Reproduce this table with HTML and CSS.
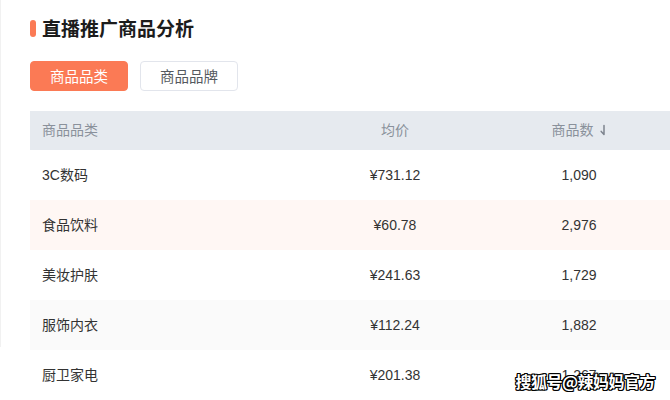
FILE: index.html
```html
<!DOCTYPE html>
<html lang="zh-CN">
<head>
<meta charset="utf-8">
<title>直播推广商品分析</title>
<link rel="stylesheet" href="styles.css">
</head>
<body>
<div class="page">
  <div class="edge"></div>
  <div class="main">
    <h2 class="title"><span class="mark"></span>直播推广商品分析</h2>
    <div class="tabs">
      <button class="tab active">商品品类</button>
      <button class="tab">商品品牌</button>
    </div>
    <div class="table">
      <div class="row head">
        <div class="c1">商品品类</div>
        <div class="c2">均价</div>
        <div class="c3">商品数
          <svg class="sort" width="8" height="12" viewBox="0 0 8 12"><path d="M5 1.5V10.5L2.2 7.4" fill="none" stroke="#7d848e" stroke-width="1.5" stroke-linecap="round" stroke-linejoin="round"/></svg>
        </div>
      </div>
      <div class="row">
        <div class="c1">3C数码</div><div class="c2">¥731.12</div><div class="c3">1,090</div>
      </div>
      <div class="row pink">
        <div class="c1">食品饮料</div><div class="c2">¥60.78</div><div class="c3">2,976</div>
      </div>
      <div class="row">
        <div class="c1">美妆护肤</div><div class="c2">¥241.63</div><div class="c3">1,729</div>
      </div>
      <div class="row gray">
        <div class="c1">服饰内衣</div><div class="c2">¥112.24</div><div class="c3">1,882</div>
      </div>
      <div class="row">
        <div class="c1">厨卫家电</div><div class="c2">¥201.38</div><div class="c3">1,267</div>
      </div>
    </div>
  </div>
</div>
<div class="watermark">搜狐号@辣妈妈官方</div>
</body>
</html>
```

FILE: styles.css
```css
html, body {
  margin: 0;
  padding: 0;
  background: #ffffff;
  overflow: hidden;
}
body {
  width: 670px;
  height: 400px;
  position: relative;
  font-family: "Liberation Sans", "Noto Sans CJK SC", sans-serif;
  color: #333333;
}
.page {
  display: flex;
  align-items: flex-start;
}
.edge {
  width: 1px;
  height: 347px;
  background: #f1f1f1;
  flex: none;
}
.main {
  flex: 1;
  padding: 14px 0 0 29px;
}
.title {
  margin: 0;
  display: flex;
  align-items: center;
  height: 28px;
  font-family: "Noto Sans CJK SC", sans-serif;
  font-size: 19px;
  font-weight: 700;
  color: #1c1c1c;
  line-height: 28px;
}
.mark {
  width: 6px;
  height: 17px;
  border-radius: 3px;
  background: #fb7a55;
  margin-right: 6px;
  margin-top: 1px;
}
.tabs {
  display: flex;
  gap: 12px;
  margin-top: 19px;
}
.tab {
  width: 98px;
  height: 30px;
  border: 1px solid #e2e5ec;
  border-radius: 4px;
  background: #ffffff;
  color: #555a60;
  font-family: "Noto Sans CJK SC", sans-serif;
  font-size: 14.5px;
  padding: 0;
  line-height: 28px;
}
.tab.active {
  background: #fb7a55;
  border-color: #fb7a55;
  color: #ffffff;
}
.table {
  margin-top: 20px;
  width: 641px;
}
.row {
  display: grid;
  grid-template-columns: 273px 184px 184px;
  height: 50px;
  align-items: center;
  font-size: 14px;
  line-height: 18px;
  color: #333333;
  padding-bottom: 1px;
  box-sizing: border-box;
}
.row.head {
  height: 39px;
  background: #e6eaef;
  color: #8a919b;
}
.row.pink { background: #fff7f4; }
.row.gray { background: #fafafa; }
.c1 {
  padding-left: 12px;
}
.c2, .c3 {
  text-align: center;
}
.c3 {
  display: flex;
  justify-content: center;
  align-items: center;
  gap: 5px;
}
.sort {
  display: block;
}
.watermark {
  position: absolute;
  right: 15px;
  bottom: 7px;
  font-family: "Noto Sans CJK SC", sans-serif;
  font-size: 16px;
  font-weight: 700;
  color: #ffffff;
  letter-spacing: -0.5px;
  text-shadow: 1px 0 0 #000, -1px 0 0 #000, 0 1px 0 #000, 0 -1px 0 #000, 1px 1px 0 #000, -1px -1px 0 #000, 1px -1px 0 #000, -1px 1px 0 #000;
}
```
